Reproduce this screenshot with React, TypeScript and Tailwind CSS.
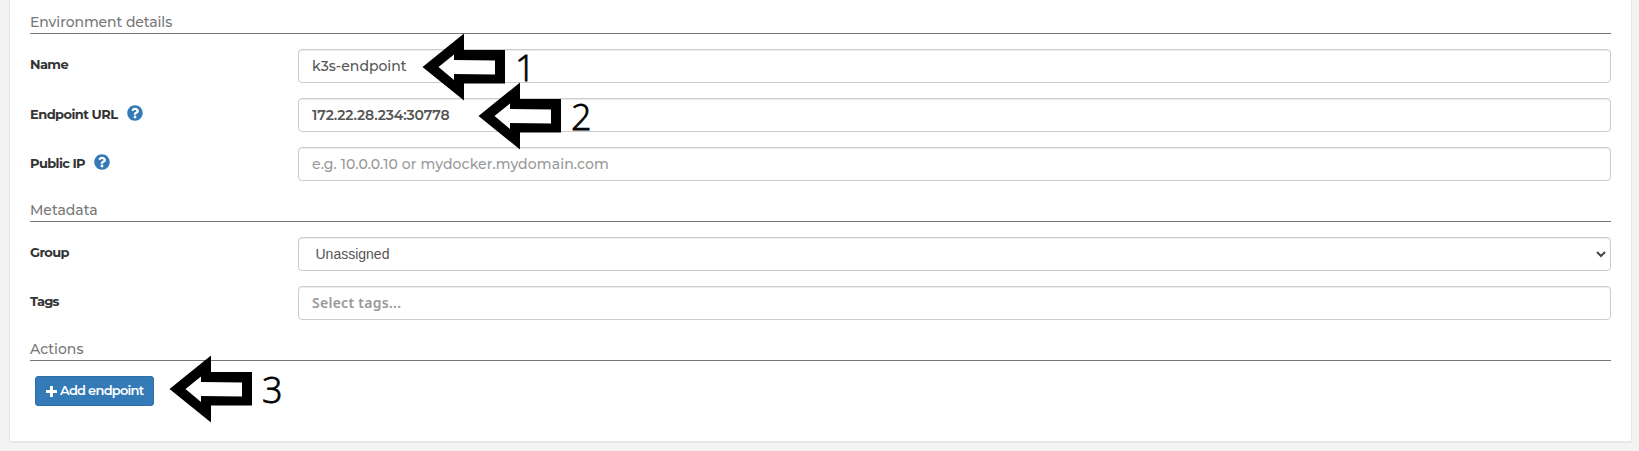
import type { ReactNode } from "react";
import { FaQuestionCircle } from "react-icons/fa";

function Section({ children, className = "" }: { children: ReactNode; className?: string }) {
  return (
    <div className={`h-[21px] border-b border-[#777777] text-sm leading-[18px] font-medium text-[#777777] ${className}`}>{children}</div>
  );
}

function Row({ label, help, children }: { label: ReactNode; help?: boolean; children: ReactNode }) {
  return (
    <div className="mb-[15px] flex h-[34px]">
      <div className={`flex w-[268px] shrink-0 items-start text-[13px] leading-5 font-bold text-[#333333] ${help ? "pt-[6px]" : "pt-[5px]"}`}>
        {label}
        {help && <FaQuestionCircle className="mt-px ml-[9px] size-4 text-[#337ab7]" />}
      </div>
      <div className="flex flex-1 items-center rounded border border-[#cccccc] px-[13px] text-sm text-[#555555] shadow-[inset_0_1px_1px_rgba(0,0,0,0.075)]">
        {children}
      </div>
    </div>
  );
}

function Marker({ n, className }: { n: number; className: string }) {
  return (
    <div className={`absolute flex ${className}`}>
      <svg width="84" height="68" viewBox="0 0 84 68">
        <path d="M.5 34 42 .5V17H83V50.500H42V67.500Z" fill="#000" />
        <path d="M16.500 34 32 21.500V27L73 27.500V41.500L32 41V47Z" fill="#fff" />
      </svg>
      <span className="mt-[10px] ml-[9px] font-['Open_Sans',sans-serif] text-[36px] leading-[50px] font-light text-black [-webkit-text-stroke:0.8px_black]">{n}</span>
    </div>
  );
}

export default function App() {
  return (
    <div className="relative h-[451px] overflow-hidden bg-[#f3f3f3] pr-[7px] pl-[9px] font-['Montserrat','Inter',sans-serif]">
      <div className="h-[443px] border-x border-b-2 border-[#e7e7e7] bg-white px-5 pt-[13px]">
        <Section className="mb-[15px]"><span className="tracking-[-0.09px]">Environment details</span></Section>
        <Row label={<span className="tracking-[-0.6px]">Name</span>}><span className="font-medium">k3s-endpoint</span></Row>
        <Row label={<span className="tracking-[-0.55px]">Endpoint URL</span>} help><span className="font-semibold tracking-[-0.1px]">172.22.28.234:30778</span></Row>
        <Row label={<span className="tracking-[-0.6px]">Public IP</span>} help><span className="font-medium tracking-[0.11px] text-[#999999]">e.g. 10.0.0.10 or mydocker.mydomain.com</span></Row>
        <Section className="mt-5 mb-[15px]"><span>Metadata</span></Section>
        <Row label={<span className="tracking-[-0.6px]">Group</span>}>
          <span className="ml-[3.5px] flex-1 font-['Liberation_Sans',sans-serif]">Unassigned</span>
          <svg width="10" height="7" viewBox="0 0 10 7" className="-mr-[9px]" fill="none" stroke="#444" strokeWidth="2">
            <path d="M1 1 5 5 9 1" />
          </svg>
        </Row>
        <Row label={<span className="tracking-[-0.75px]">Tags</span>}><span className="font-['Noto_Sans',sans-serif] font-semibold tracking-[0.27px] text-[#999999]">Select tags...</span></Row>
        <Section className="mt-5 mb-[15px]"><span>Actions</span></Section>
        <button className="ml-[5px] flex h-[30px] w-[119px] items-center rounded-[3px] border border-[#2e6da4] bg-[#337ab7] pl-[10px] text-[13px] font-semibold whitespace-nowrap text-white">
          <svg width="11" height="11" viewBox="0 0 11 11" className="mr-[3px] shrink-0" fill="none" stroke="currentColor" strokeWidth="3">
            <path d="M5.500 0V11M0 5.500H11" />
          </svg>
          <span className="tracking-[-0.75px]">Add endpoint</span>
        </button>
      </div>
      <Marker n={1} className="top-[33px] left-[422px]" />
      <Marker n={2} className="top-[82px] left-[478px]" />
      <Marker n={3} className="top-[355px] left-[169px]" />
    </div>
  );
}
